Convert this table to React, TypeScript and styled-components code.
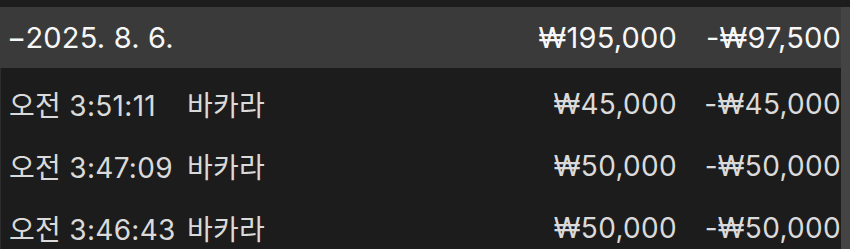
import React from "react";
import styled, { createGlobalStyle } from "styled-components";

const Global = createGlobalStyle`
  html, body { margin: 0; padding: 0; background: #1c1c1c; }
  body { font-family: "Inter", "Noto Sans CJK KR", sans-serif; -webkit-font-smoothing: antialiased; }
`;

const Screen = styled.div`
  position: relative;
  width: 850px;
  height: 249px;
  overflow: hidden;
  background: #1c1c1c;
  display: flex;
  flex-direction: column;
`;

const TopBand = styled.div`
  height: 7px;
  flex: none;
  background: #1d1d1d;
`;

const Content = styled.div`
  display: flex;
  flex-direction: column;
  padding-right: 9px;
`;

const Grid = styled.div<{ $header?: boolean }>`
  display: grid;
  grid-template-columns: 178px 1fr 160px 164px;
  align-items: center;
  box-sizing: border-box;
  height: ${(p) => (p.$header ? 61 : 62)}px;
  padding-top: ${(p) => (p.$header ? 0 : 9)}px;
  padding-left: ${(p) => (p.$header ? 7 : 8)}px;
  background: ${(p) => (p.$header ? "#3a3a3a" : "#1c1c1c")};
  color: ${(p) => (p.$header ? "#f7f7f7" : "#dadada")};
  font-size: ${(p) => (p.$header ? 29 : 28)}px;
  letter-spacing: ${(p) => (p.$header ? 0.2 : 0.3)}px;
  border-left: ${(p) => (p.$header ? "none" : "1px solid #2c2c2c")};
  white-space: nowrap;
`;

const DateCell = styled.div`
  grid-column: 1 / 3;
`;

const Cell = styled.div<{ $right?: boolean }>`
  text-align: ${(p) => (p.$right ? "right" : "left")};
`;

const Scrollbar = styled.div`
  position: absolute;
  top: 7px;
  right: 0;
  bottom: 0;
  width: 9px;
  background: rgba(84, 84, 84, 0.71);
`;

const rows = [
  { time: "오전 3:51:11", game: "바카라", bet: "₩45,000", win: "-₩45,000" },
  { time: "오전 3:47:09", game: "바카라", bet: "₩50,000", win: "-₩50,000" },
  { time: "오전 3:46:43", game: "바카라", bet: "₩50,000", win: "-₩50,000" },
];

export default function App() {
  return (
    <>
      <Global />
      <Screen>
        <TopBand />
        <Content>
          <Grid $header>
            <DateCell>−2025. 8. 6.</DateCell>
            <Cell $right>₩195,000</Cell>
            <Cell $right>-₩97,500</Cell>
          </Grid>
          {rows.map((r, i) => (
            <Grid key={i}>
              <Cell>{r.time}</Cell>
              <Cell>{r.game}</Cell>
              <Cell $right>{r.bet}</Cell>
              <Cell $right>{r.win}</Cell>
            </Grid>
          ))}
        </Content>
        <Scrollbar />
      </Screen>
    </>
  );
}
